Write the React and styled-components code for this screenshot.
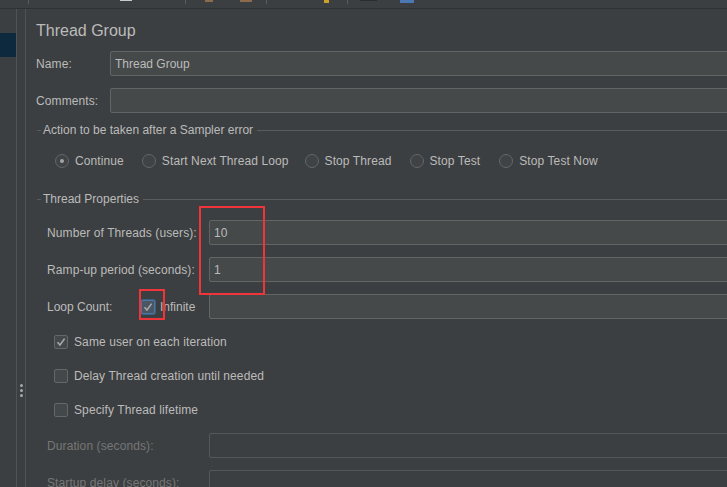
import React from "react";
import styled, { createGlobalStyle } from "styled-components";

const Global = createGlobalStyle`
  html, body {
    margin: 0;
    padding: 0;
    background: #3c3f41;
    overflow: hidden;
  }
  * { box-sizing: border-box; }
`;

const Root = styled.div`
  position: relative;
  width: 727px;
  height: 487px;
  display: flex;
  flex-direction: column;
  background: #3c3f41;
  color: #bbbbbb;
  font-family: "Liberation Sans", Arial, sans-serif;
  font-size: 12px;
  overflow: hidden;
`;

const Toolbar = styled.div`
  height: 9px;
  flex: none;
  display: flex;
  align-items: flex-start;
  border-bottom: 1px solid #2f3133;
`;

const Sep = styled.div`
  width: 1px;
  height: 4px;
  margin-left: ${(p) => p.$ml}px;
  background: #5a5d5f;
`;

const ToolIcon = styled.div`
  width: ${(p) => p.$w}px;
  height: ${(p) => p.$h || 2}px;
  margin-left: ${(p) => p.$ml}px;
  background: ${(p) => p.$c};
`;

const Body = styled.div`
  flex: 1;
  display: flex;
  min-height: 0;
`;

const Sidebar = styled.div`
  width: 17px;
  flex: none;
  border-right: 1px solid #505355;
  padding-top: 24px;
`;

const Selected = styled.div`
  height: 24px;
  background: #0d293e;
`;

const Splitter = styled.div`
  width: 9px;
  flex: none;
  border-right: 1px solid #505355;
  display: flex;
  flex-direction: column;
  align-items: center;
  gap: 2px;
  padding-top: 375px;
`;

const Dot = styled.div`
  width: 3px;
  height: 3px;
  border-radius: 50%;
  background: #a8a8a8;
`;

const Main = styled.div`
  flex: 1;
  padding: 12px 0 0 10px;
  overflow: hidden;
  display: flex;
  flex-direction: column;
`;

const Title = styled.div`
  font-size: 16px;
  line-height: 20px;
  height: 20px;
`;

const FieldRow = styled.div`
  display: grid;
  grid-template-columns: ${(p) => p.$label}px 1fr;
  align-items: center;
  margin-top: ${(p) => p.$mt}px;
  padding-left: ${(p) => p.$pl || 0}px;
  color: ${(p) => (p.$disabled ? "#767676" : "#bbbbbb")};
`;

const Label = styled.span`
  letter-spacing: 0.1px;
`;

const Input = styled.div`
  height: 25px;
  margin-right: -6px;
  border: 1px solid ${(p) => (p.$disabled ? "#555758" : "#646464")};
  border-radius: 2px;
  background: ${(p) => (p.$disabled ? "#3c3f41" : "#45494a")};
  padding: 0 4px;
  display: flex;
  align-items: center;
  color: #bbbbbb;
`;

const GroupTitle = styled.div`
  display: flex;
  align-items: center;
  height: 14px;
  margin-top: ${(p) => p.$mt}px;
  padding-left: 1px;
  &::before {
    content: "";
    width: 4px;
    height: 1px;
    background: #5a5d5f;
    margin-right: 2px;
  }
  &::after {
    content: "";
    flex: 1;
    height: 1px;
    background: #5a5d5f;
    margin-left: 4px;
  }
`;

const RadioRow = styled.div`
  display: flex;
  align-items: center;
  height: 14px;
  margin-top: 17px;
  padding-left: 19px;
`;

const RadioItem = styled.label`
  display: flex;
  align-items: center;
  gap: 6px;
  letter-spacing: 0.1px;
  margin-right: ${(p) => p.$mr}px;
`;

const Radio = styled.span`
  width: 14px;
  height: 14px;
  border-radius: 50%;
  border: 1px solid #646668;
  background: #404345;
  display: flex;
  align-items: center;
  justify-content: center;
  &::after {
    content: "";
    width: 4px;
    height: 4px;
    border-radius: 50%;
    background: ${(p) => (p.$on ? "#a5a5a5" : "transparent")};
  }
`;

const Check = styled.span`
  width: 14px;
  height: 14px;
  flex: none;
  border-radius: 2px;
  border: 1px solid ${(p) => (p.$focus ? "#4b77a3" : "#646668")};
  background: ${(p) => (p.$focus ? "#4a5664" : "#43494a")};
  display: flex;
  align-items: center;
  justify-content: center;
  box-shadow: ${(p) => (p.$focus ? "0 0 0 1px #3d5f80" : "none")};
`;

const CheckRow = styled.label`
  display: flex;
  align-items: center;
  gap: 6px;
  height: 14px;
  letter-spacing: 0.1px;
  margin-top: ${(p) => p.$mt}px;
  padding-left: 18px;
`;

const LoopLabel = styled.div`
  display: flex;
  align-items: center;
  gap: 5px;
`;

const LoopText = styled.span`
  width: 89px;
`;

const Highlight = styled.div`
  position: absolute;
  border: 2px solid #f0353a;
  left: ${(p) => p.$x}px;
  top: ${(p) => p.$y}px;
  width: ${(p) => p.$w}px;
  height: ${(p) => p.$h}px;
  pointer-events: none;
`;

const Tick = () => (
  <svg width="10" height="10" viewBox="0 0 10 10">
    <path d="M1.5 5.2 L4 8 L8.6 1.6" fill="none" stroke="#a9a9a9" strokeWidth="1.6" />
  </svg>
);

const radios = [
  { label: "Continue", on: true, mr: 18 },
  { label: "Start Next Thread Loop", mr: 16 },
  { label: "Stop Thread", mr: 18 },
  { label: "Stop Test", mr: 19 },
  { label: "Stop Test Now", mr: 0 },
];

export default function App() {
  return (
    <Root>
      <Global />
      <Toolbar>
        <Sep $ml={28} />
        <ToolIcon $ml={91} $w={12} $h={1} $c="#c8c8c8" />
        <Sep $ml={53} />
        <ToolIcon $ml={19} $w={8} $c="#8a6d4a" />
        <ToolIcon $ml={27} $w={12} $c="#8c6b4c" />
        <Sep $ml={14} />
        <ToolIcon $ml={57} $w={5} $h={3} $c="#c9a227" />
        <Sep $ml={18} />
        <ToolIcon $ml={12} $w={17} $h={1} $c="#2a2c2d" />
        <ToolIcon $ml={23} $w={14} $h={3} $c="#4b78b3" />
      </Toolbar>
      <Body>
        <Sidebar>
          <Selected />
        </Sidebar>
        <Splitter>
          <Dot />
          <Dot />
          <Dot />
        </Splitter>
        <Main>
          <Title>Thread Group</Title>
          <FieldRow $label={74} $mt={10}>
            <Label>Name:</Label>
            <Input>Thread Group</Input>
          </FieldRow>
          <FieldRow $label={74} $mt={12}>
            <Label>Comments:</Label>
            <Input />
          </FieldRow>

          <GroupTitle $mt={10}>Action to be taken after a Sampler error</GroupTitle>
          <RadioRow>
            {radios.map((r) => (
              <RadioItem key={r.label} $mr={r.mr}>
                <Radio $on={r.on} />
                {r.label}
              </RadioItem>
            ))}
          </RadioRow>

          <GroupTitle $mt={24}>Thread Properties</GroupTitle>
          <FieldRow $label={162} $pl={11} $mt={14}>
            <Label>Number of Threads (users):</Label>
            <Input>10</Input>
          </FieldRow>
          <FieldRow $label={162} $pl={11} $mt={12}>
            <Label>Ramp-up period (seconds):</Label>
            <Input>1</Input>
          </FieldRow>
          <FieldRow $label={162} $pl={11} $mt={12}>
            <LoopLabel>
              <LoopText>Loop Count:</LoopText>
              <Check $focus>
                <Tick />
              </Check>
              <span>Infinite</span>
            </LoopLabel>
            <Input />
          </FieldRow>

          <CheckRow $mt={16}>
            <Check>
              <Tick />
            </Check>
            Same user on each iteration
          </CheckRow>
          <CheckRow $mt={20}>
            <Check />
            Delay Thread creation until needed
          </CheckRow>
          <CheckRow $mt={20}>
            <Check />
            Specify Thread lifetime
          </CheckRow>

          <FieldRow $label={162} $pl={11} $mt={16} $disabled>
            <Label>Duration (seconds):</Label>
            <Input $disabled />
          </FieldRow>
          <FieldRow $label={162} $pl={11} $mt={12} $disabled>
            <Label>Startup delay (seconds):</Label>
            <Input $disabled />
          </FieldRow>
        </Main>
      </Body>
      <Highlight $x={199} $y={206} $w={66} $h={89} />
      <Highlight $x={139} $y={289} $w={26} $h={31} />
    </Root>
  );
}
